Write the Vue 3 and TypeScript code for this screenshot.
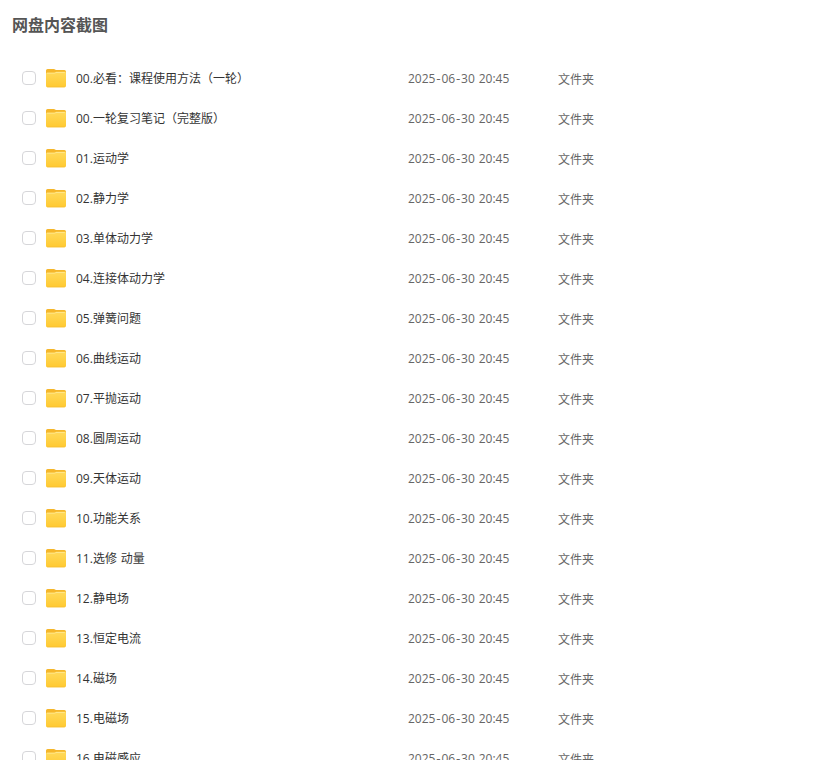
<script setup lang="ts">
interface FileRow {
  name: string
  date: string[]
  time: string
  type: string
}

const names: string[] = [
  '00.必看：课程使用方法（一轮）',
  '00.一轮复习笔记（完整版）',
  '01.运动学',
  '02.静力学',
  '03.单体动力学',
  '04.连接体动力学',
  '05.弹簧问题',
  '06.曲线运动',
  '07.平抛运动',
  '08.圆周运动',
  '09.天体运动',
  '10.功能关系',
  '11.选修 动量',
  '12.静电场',
  '13.恒定电流',
  '14.磁场',
  '15.电磁场',
  '16.电磁感应',
]

const rows: FileRow[] = names.map((name) => ({
  name,
  date: '2025-06-30'.split('-'),
  time: '20:45',
  type: '文件夹',
}))
</script>

<template>
  <main class="page">
    <svg class="defs" width="0" height="0" aria-hidden="true">
      <defs>
        <linearGradient id="folder-front" x1="0" y1="0" x2="0" y2="1">
          <stop offset="0" stop-color="#ffda5c" />
          <stop offset="1" stop-color="#ffc930" />
        </linearGradient>
      </defs>
    </svg>
    <h1 class="title">网盘内容截图</h1>
    <ul class="list">
      <li v-for="row in rows" :key="row.name" class="row">
        <span class="check"></span>
        <svg class="folder" width="20" height="20" viewBox="0 0 20 20">
          <path
            d="M0 2.6A1.6 1.6 0 0 1 1.6 1h6.2c.6 0 1 .2 1.4.6l.6.5h8.6A1.6 1.6 0 0 1 20 3.7V11H0z"
            fill="#f5b62a"
          />
          <path
            d="M0 5.6c0-.5.4-.9.9-.9h7c.5 0 .9-.1 1.300-.4l.5-.3c.3-.2.6-.3 1-.3h8.100c.7 0 1.200.5 1.200 1.200v12.800a1.600 1.600 0 0 1-1.600 1.600H1.600A1.600 1.600 0 0 1 0 17.700z"
            fill="url(#folder-front)"
          />
          <path d="M1 5.200h7.200c.5 0 .9-.1 1.300-.4l.4-.3h8.900" fill="none" stroke="#ffe88e" stroke-width=".9" />
          <path d="M1.200 18.900h17.600" fill="none" stroke="#f7bd35" stroke-width=".7" />
        </svg>
        <span class="name">{{ row.name }}</span>
        <span class="date"
          ><template v-for="(part, i) in row.date" :key="i"
            ><span v-if="i > 0" class="dash">-</span>{{ part }}</template
          >{{ ' ' + row.time }}</span
        >
        <span class="type">{{ row.type }}</span>
      </li>
    </ul>
  </main>
</template>

<style>
body {
  background: #fff;
}
</style>

<style scoped>
.page {
  height: 760px;
  overflow: hidden;
  font-family: 'Open Sans', 'Noto Sans CJK SC', sans-serif;
}
.defs {
  display: block;
}
.title {
  margin: 0;
  padding: 13px 12px 0;
  height: 45px;
  font-size: 16px;
  line-height: 24px;
  font-weight: 700;
  color: #555;
}
.list {
  margin: 0;
  padding: 0;
  list-style: none;
}
.row {
  display: flex;
  align-items: center;
  height: 40px;
  padding-left: 22px;
  font-size: 12px;
  white-space: nowrap;
  word-spacing: 0.8px;
}
.check {
  box-sizing: border-box;
  width: 14px;
  height: 14px;
  border: 1px solid #d6d6d9;
  border-radius: 4px;
}
.folder {
  margin-left: 10px;
}
.name {
  width: 332px;
  margin-left: 10px;
  color: #333;
}
.date {
  width: 150px;
  color: #666;
}
.dash {
  padding: 0 0.8px;
  font-family: 'DejaVu Sans', sans-serif;
  line-height: 1;
}
.type {
  padding-top: 1px;
  color: #666;
}
</style>
